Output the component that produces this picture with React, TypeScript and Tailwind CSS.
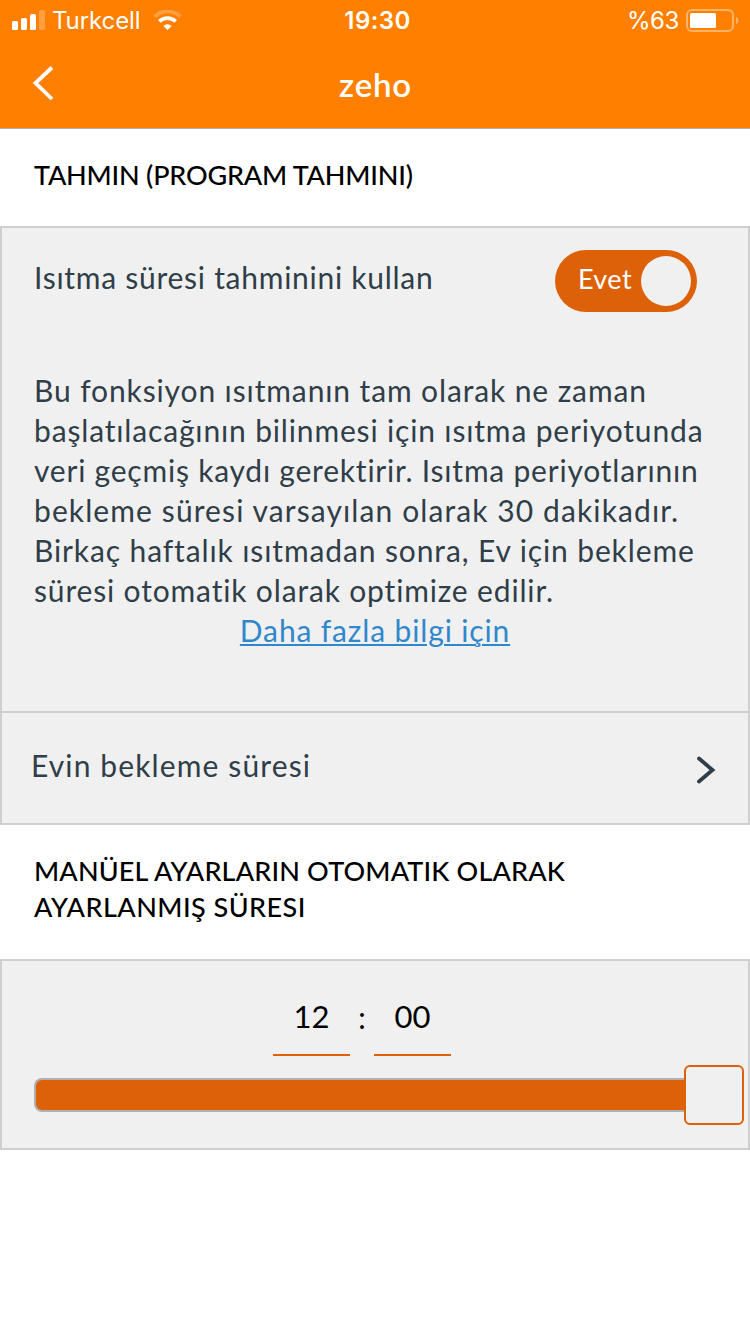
import type { ReactNode } from 'react';

const infoLines = [
  { text: 'Bu fonksiyon ısıtmanın tam olarak ne zaman', spacing: 'tracking-[0.88px]' },
  { text: 'başlatılacağının bilinmesi için ısıtma periyotunda', spacing: 'tracking-[0.84px]' },
  { text: 'veri geçmiş kaydı gerektirir. Isıtma periyotlarının', spacing: 'tracking-[0.78px]' },
  { text: 'bekleme süresi varsayılan olarak 30 dakikadır.', spacing: 'tracking-[1.1px]' },
  { text: 'Birkaç haftalık ısıtmadan sonra, Ev için bekleme', spacing: 'tracking-[0.88px]' },
  { text: 'süresi otomatik olarak optimize edilir.', spacing: 'tracking-[0.84px]' },
];

function StatusBar() {
  return (
    <div className="flex h-10 items-center justify-between font-['Inter',sans-serif] text-white">
      <div className="flex w-[300px] items-center pl-3">
        <svg width="34" height="20" viewBox="0 0 34 20" fill="#fff">
          <rect x="0" y="11" width="6" height="9" rx="1.6" />
          <rect x="9" y="8" width="6" height="12" rx="1.6" />
          <rect x="18" y="4" width="6" height="16" rx="1.6" />
          <rect x="27" y="0" width="6" height="20" rx="1.6" opacity="0.25" />
        </svg>
        <span className="ml-[6px] pt-0.5 text-[24px] leading-10 tracking-[-0.1px]">Turkcell</span>
        <svg className="ml-[12px]" width="29" height="20" viewBox="0 0 29 20" fill="none" stroke="#fff">
          <path d="M1.600 6.600a18.600 18.600 0 0 1 25.800 0" strokeWidth="3.800" opacity="0.25" />
          <path d="M6.300 11.400a11.900 11.900 0 0 1 16.400 0" strokeWidth="3.800" />
          <path d="M10.300 15.900a6 6 0 0 1 8.400 0l-4.200 4.100z" fill="#fff" stroke="none" />
        </svg>
      </div>
      <span className="pt-0.5 pl-[5px] text-[24px] leading-10 font-semibold tracking-[0.4px]">19:30</span>
      <div className="flex w-[300px] items-center justify-end pr-[11px]">
        <span className="pt-0.5 text-[24px] leading-10 tracking-[-0.4px]">%63</span>
        <svg className="ml-[7px]" width="53" height="23" viewBox="0 0 53 23">
          <rect x="1" y="1" width="46" height="21" rx="5" fill="none" stroke="#fff" strokeWidth="2" opacity="0.4" />
          <rect x="4" y="4" width="26" height="15" rx="1.500" fill="#fff" />
          <path d="M50 7.500a4.500 4.500 0 0 1 0 8z" fill="#fff" opacity="0.4" />
        </svg>
      </div>
    </div>
  );
}

function SectionTitle({ children }: { children: ReactNode }) {
  return (
    <h2 className="pt-7 pr-8 pl-[34px] text-[27px] leading-9 font-medium text-black">{children}</h2>
  );
}

function TimeField({ value }: { value: string }) {
  return (
    <div className="h-[72px] w-[77px] border-b-2 border-[#dd6108] pt-3 text-center text-[31px] leading-10 text-black">
      {value}
    </div>
  );
}

export default function App() {
  return (
    <div className="min-h-[1334px] w-[750px] bg-white font-['Lato','Open_Sans',sans-serif] text-[#2f3e48]">
      <header className="h-[129px] border-b border-[#b0b0b0] bg-[#ff8000] text-white">
        <StatusBar />
        <div className="flex h-[88px] items-center">
          <svg className="ml-[31px]" width="24" height="36" viewBox="0 0 24 36" fill="none" stroke="#fff" strokeWidth="3.800">
            <path d="M21 1.500L4.500 17L21 33" />
          </svg>
          <h1 className="mr-[54px] flex-1 pb-px text-center text-[33px] leading-10 font-semibold tracking-[0.8px]">zeho</h1>
        </div>
      </header>

      {/* Preheat estimation */}
      <div className="h-[97px]">
        <SectionTitle>
          <span className="tracking-[-0.2px]">TAHMIN (PROGRAM TAHMINI)</span>
        </SectionTitle>
      </div>
      <section className="h-[487px] border-2 border-[#cfcfcf] bg-[#f0f0f0]">
        <div className="flex justify-between pt-[22px] pr-[51px] pl-8">
          <span className="pt-[7px] text-[30px] leading-10 tracking-[0.73px]">Isıtma süresi tahminini kullan</span>
          <div className="flex h-[62px] w-[142px] items-center justify-between rounded-full bg-[#dd6108] pr-1.5 pl-[23px]">
            <span className="pb-1 text-[27px] leading-10 tracking-[0.4px] text-white">Evet</span>
            <div className="size-[50px] rounded-full bg-[#f0f0f0]" />
          </div>
        </div>
        <div className="mt-[58px] pl-8 text-[30px] leading-10 whitespace-nowrap">
          {infoLines.map((line) => (
            <p key={line.text}>
              <span className={line.spacing}>{line.text}</span>
            </p>
          ))}
        </div>
        <div className="text-center text-[30px] leading-10">
          <a href="#" className="tracking-[0.86px] text-[#3088cc] underline decoration-2 underline-offset-2">
            Daha fazla bilgi için
          </a>
        </div>
      </section>
      <section className="flex h-28 items-center justify-between border-x-2 border-b-2 border-[#cfcfcf] bg-[#f0f0f0] pr-8 pl-[29px]">
        <span className="pb-[7px] text-[30px] leading-10 tracking-[1.12px]">Evin bekleme süresi</span>
        <svg className="mt-1" width="20" height="28" viewBox="0 0 20 28" fill="none" stroke="#2f3e48" strokeWidth="3.800" strokeLinecap="round">
          <path d="M3 2.500L16.500 14L3 25.500" />
        </svg>
      </section>

      {/* Manual override duration */}
      <div className="h-[134px]">
        <SectionTitle>
          <span className="tracking-[0.17px]">MANÜEL AYARLARIN OTOMATIK OLARAK</span>
          <br />
          <span className="tracking-[0.47px]">AYARLANMIŞ SÜRESI</span>
        </SectionTitle>
      </div>
      <section className="h-[191px] border-2 border-[#cfcfcf] bg-[#f0f0f0]">
        <div className="flex pt-[23px] pl-[271px]">
          <TimeField value="12" />
          <span className="w-6 pt-[13px] text-center text-[30px] leading-10 text-black">:</span>
          <TimeField value="00" />
        </div>
        <div className="mt-[9px] flex items-center pl-8">
          <div className="h-[34px] w-[650px] rounded-l-lg border-2 border-r-0 border-[#b0b0b0] bg-[#dd6108]" />
          <div className="size-[60px] rounded-md border-2 border-[#dd6108] bg-[#f0f0f0]" />
        </div>
      </section>
    </div>
  );
}
